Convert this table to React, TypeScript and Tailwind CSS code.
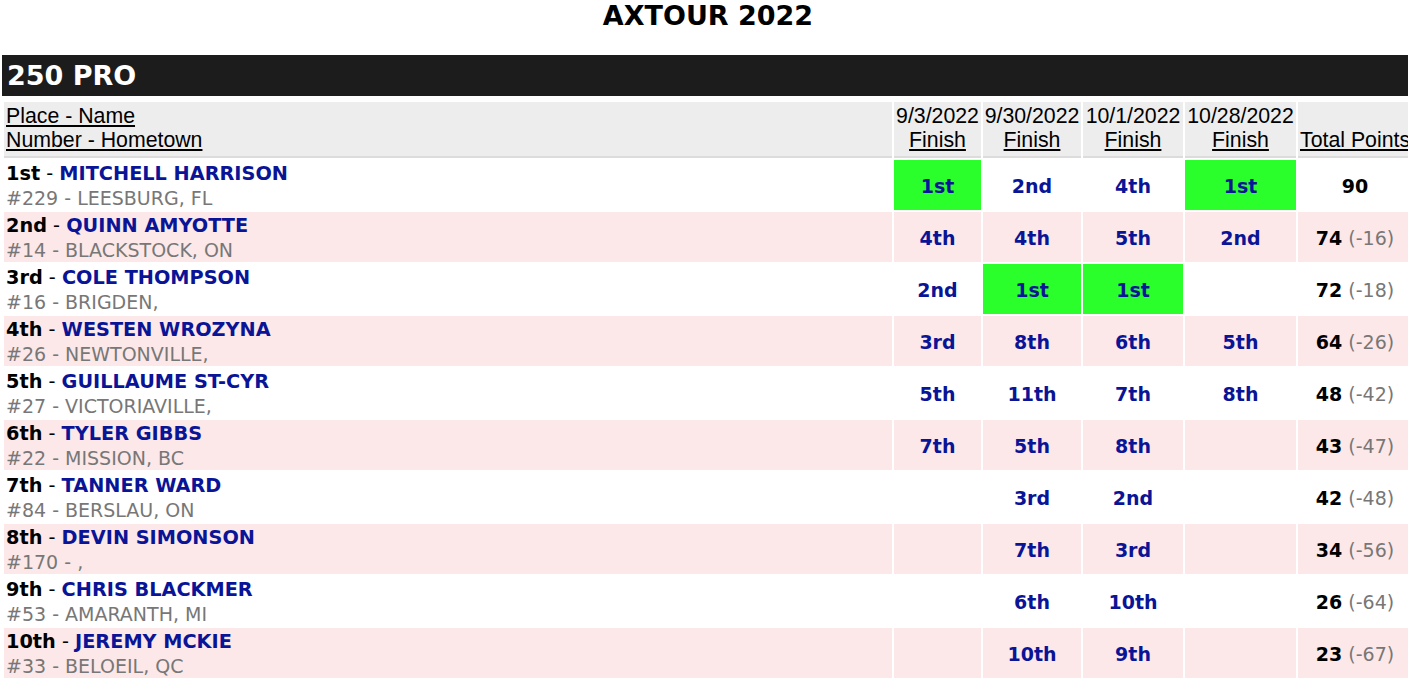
const rows = [
  { place: '1st', name: 'MITCHELL HARRISON', num: '229', town: 'LEESBURG, FL', finishes: ['1st', '2nd', '4th', '1st'], total: 90, diff: '' },
  { place: '2nd', name: 'QUINN AMYOTTE', num: '14', town: 'BLACKSTOCK, ON', finishes: ['4th', '4th', '5th', '2nd'], total: 74, diff: '(-16)' },
  { place: '3rd', name: 'COLE THOMPSON', num: '16', town: 'BRIGDEN,', finishes: ['2nd', '1st', '1st', ''], total: 72, diff: '(-18)' },
  { place: '4th', name: 'WESTEN WROZYNA', num: '26', town: 'NEWTONVILLE,', finishes: ['3rd', '8th', '6th', '5th'], total: 64, diff: '(-26)' },
  { place: '5th', name: 'GUILLAUME ST-CYR', num: '27', town: 'VICTORIAVILLE,', finishes: ['5th', '11th', '7th', '8th'], total: 48, diff: '(-42)' },
  { place: '6th', name: 'TYLER GIBBS', num: '22', town: 'MISSION, BC', finishes: ['7th', '5th', '8th', ''], total: 43, diff: '(-47)' },
  { place: '7th', name: 'TANNER WARD', num: '84', town: 'BERSLAU, ON', finishes: ['', '3rd', '2nd', ''], total: 42, diff: '(-48)' },
  { place: '8th', name: 'DEVIN SIMONSON', num: '170', town: ',', finishes: ['', '7th', '3rd', ''], total: 34, diff: '(-56)' },
  { place: '9th', name: 'CHRIS BLACKMER', num: '53', town: 'AMARANTH, MI', finishes: ['', '6th', '10th', ''], total: 26, diff: '(-64)' },
  { place: '10th', name: 'JEREMY MCKIE', num: '33', town: 'BELOEIL, QC', finishes: ['', '10th', '9th', ''], total: 23, diff: '(-67)' },
];

const events = [
  { date: '9/3/2022', width: 'w-[87px]' },
  { date: '9/30/2022', width: 'w-[98px]' },
  { date: '10/1/2022', width: 'w-[100px]' },
  { date: '10/28/2022', width: 'w-[111px]' },
];

export default function App() {
  return (
    <div className="w-full overflow-hidden bg-white">
      <div className="w-[1416px] font-['DejaVu_Sans',Verdana,sans-serif] text-black">
        <h1 className="h-[55px] text-center text-[27px] font-bold leading-[32px]">AXTOUR 2022</h1>

        <div className="mx-[2px] h-[41px] bg-[#1c1c1c] pl-[5px] text-[27px] font-bold leading-[41px] text-white">
          250 PRO
        </div>

        <table className="mx-[2px] mt-[4px] w-[1412px] table-fixed border-separate border-spacing-[2px]">
          <thead>
            <tr className="font-['Liberation_Sans',Arial,sans-serif] text-[21.3px] font-normal leading-[24px]">
              <th className="w-[888px] border-b-2 border-[#dcdcdc] bg-[#ededed] px-[2px] pt-[2px] pb-[4px] text-left align-bottom font-normal">
                <span className="underline">Place - Name</span>
                <br />
                <span className="underline">Number - Hometown</span>
              </th>
              {events.map((ev) => (
                <th
                  key={ev.date}
                  className={`${ev.width} border-b-2 border-[#dcdcdc] bg-[#ededed] px-0 pt-[2px] pb-[4px] text-center align-bottom font-normal whitespace-nowrap`}
                >
                  {ev.date}
                  <br />
                  <span className="underline">Finish</span>
                </th>
              ))}
              <th className="w-[114px] border-b-2 border-[#dcdcdc] bg-[#ededed] px-0 pt-[2px] pb-[4px] text-left align-bottom font-normal whitespace-nowrap">
                <span className="ml-[2px] underline">Total Points</span>
              </th>
            </tr>
          </thead>
          <tbody>
            {rows.map((r, i) => {
              const rowBg = i % 2 === 1 ? 'bg-[#fce8e8]' : 'bg-white';
              return (
                <tr key={r.name} className="text-[19px] leading-[24px]">
                  <td className={`${rowBg} h-[50px] px-[2px] pt-[2px] align-middle whitespace-nowrap`}>
                    <div className="text-[19.3px]">
                      <span className="font-bold">{r.place}</span> -{' '}
                      <span className="font-bold text-[#0a1496]">{r.name}</span>
                    </div>
                    <div className="text-[#777777]">
                      #{r.num} - {r.town}
                    </div>
                  </td>
                  {r.finishes.map((f, j) => (
                    <td
                      key={j}
                      className={`${f === '1st' ? 'bg-[#2bff2b]' : rowBg} h-[50px] pt-[2px] text-center align-middle font-bold text-[#0a1496]`}
                    >
                      {f}
                    </td>
                  ))}
                  <td className={`${rowBg} h-[50px] pt-[2px] text-center align-middle whitespace-nowrap`}>
                    <span className="font-bold">{r.total}</span>
                    {r.diff && <span className="text-[#777777]"> {r.diff}</span>}
                  </td>
                </tr>
              );
            })}
          </tbody>
        </table>
      </div>
    </div>
  );
}
